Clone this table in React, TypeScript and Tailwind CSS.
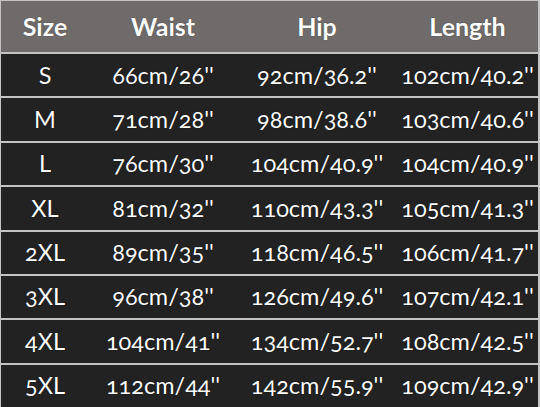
const rows = [
  ["S", "66cm/26''", "92cm/36.2''", "102cm/40.2''"],
  ["M", "71cm/28''", "98cm/38.6''", "103cm/40.6''"],
  ["L", "76cm/30''", "104cm/40.9''", "104cm/40.9''"],
  ["XL", "81cm/32''", "110cm/43.3''", "105cm/41.3''"],
  ["2XL", "89cm/35''", "118cm/46.5''", "106cm/41.7''"],
  ["3XL", "96cm/38''", "126cm/49.6''", "107cm/42.1''"],
  ["4XL", "104cm/41''", "134cm/52.7''", "108cm/42.5''"],
  ["5XL", "112cm/44''", "142cm/55.9''", "109cm/42.9''"],
];

const cols = "grid grid-cols-[88px_148px_160px_1fr] items-center";

export default function App() {
  return (
    <div
      className="w-[540px] h-[407px] flex flex-col gap-[2px] bg-[#c4c4c4] pt-px pl-px pr-[2px] text-white [font-variant-numeric:oldstyle-nums]"
      style={{ fontFamily: "Lato, 'Noto Sans', sans-serif" }}
    >
      <div className={`${cols} h-[51px] shrink-0 bg-[#6f6b6a] text-[25px] font-bold text-center [text-shadow:0_0_1px_#333]`}>
        <div>Size</div>
        <div>Waist</div>
        <div>Hip</div>
        <div>Length</div>
      </div>
      {rows.map((r) => (
        <div key={r[0]} className={`${cols} flex-1 bg-[#222222] text-[23.5px] text-center [text-shadow:0_0_1px_#000]`}>
          {r.map((c, i) => (
            <div key={i}>{c}</div>
          ))}
        </div>
      ))}
    </div>
  );
}
